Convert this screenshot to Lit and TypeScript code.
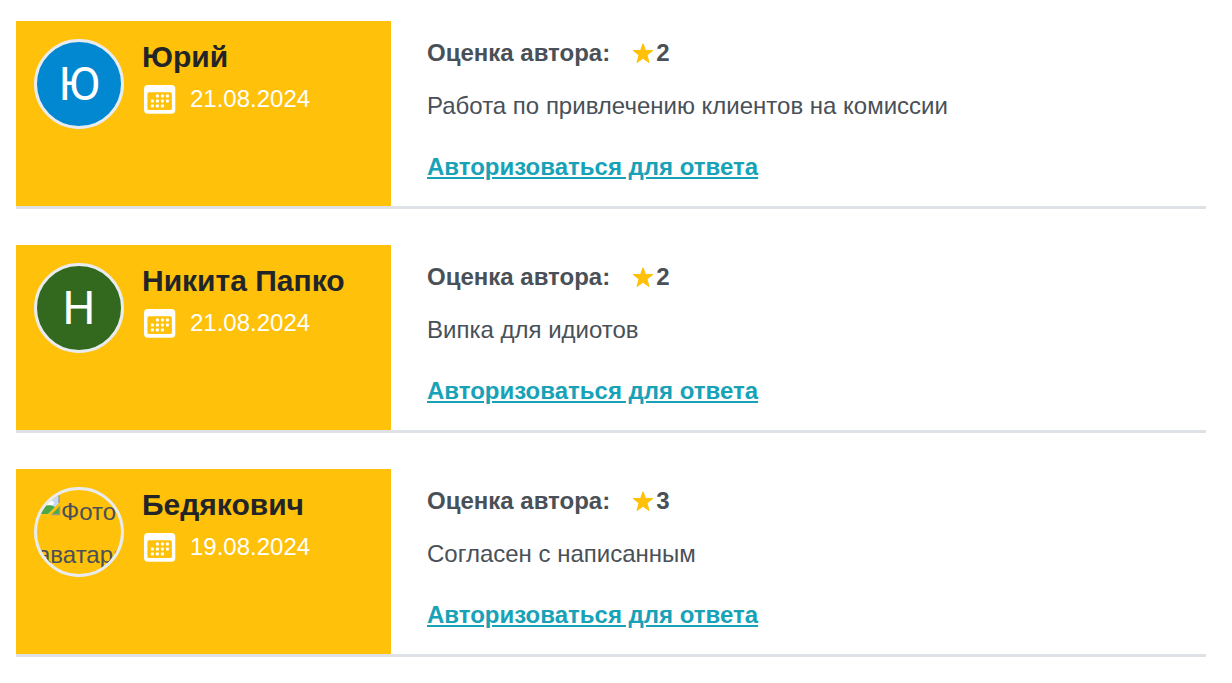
import { LitElement, html, css, svg } from "lit";
import { customElement, property } from "lit/decorators.js";
import { classMap } from "lit/directives/class-map.js";

interface Review {
  name: string;
  date: string;
  iso: string;
  rating: number;
  text: string;
  tone: "blue" | "green" | "none";
}

const REVIEWS: Review[] = [
  { name: "Юрий", date: "21.08.2024", iso: "2024-08-21", rating: 2, text: "Работа по привлечению клиентов на комиссии", tone: "blue" },
  { name: "Никита Папко", date: "21.08.2024", iso: "2024-08-21", rating: 2, text: "Випка для идиотов", tone: "green" },
  { name: "Бедякович", date: "19.08.2024", iso: "2024-08-19", rating: 3, text: "Согласен с написанным", tone: "none" },
];

// Day dots of the calendar: [column, row]
const DAYS = [[1, 0], [2, 0], [3, 0], [0, 1], [1, 1], [2, 1], [3, 1], [0, 2], [1, 2], [2, 2]];

const calendarIcon = html`<svg class="calendar" viewBox="0 0 32 29" width="32" height="29" aria-hidden="true">
  <path fill="#fff" fill-rule="evenodd" d="M4 0h23.3a4 4 0 0 1 4 4v20.7a4 4 0 0 1-4 4H4a4 4 0 0 1-4-4V4a4 4 0 0 1 4-4zM5 7.2a1.6 1.6 0 0 0-1.6 1.6v14.6A1.6 1.6 0 0 0 5 25h21.3a1.6 1.6 0 0 0 1.6-1.6V8.8a1.6 1.6 0 0 0-1.6-1.6z"/>
  ${DAYS.map(([c, r]) => svg`<rect x=${6.9 + c * 5} y=${9.6 + r * 5} width="3" height="3" rx="0.8" fill="#fff"/>`)}
</svg>`;

const starIcon = html`<svg class="star" viewBox="0 0 22 21" width="22" height="21" aria-hidden="true">
  <path fill="#ffc107" stroke="#ffc107" stroke-width="1" stroke-linejoin="round" d="M11 .8l2.4 6.6 7.4.2-5.8 4.5 2 7.4-6-4.2-6 4.2 2-7.4L1.2 7.6l7.4-.2z"/>
</svg>`;

const brokenIcon = html`<svg class="broken" viewBox="0 0 24 24" width="24" height="24" aria-hidden="true">
  <path fill="#c6d9f4" d="M3 3h19v8L11 22H3z"/>
  <path fill="#fff" d="M5 11a3 3 0 0 1 3-3 4 4 0 0 1 7 1 2 2 0 0 1 0 4H7a2 2 0 0 1-2-2z"/>
  <path fill="#4ea744" d="M3 19c4-6 9-7 15-4l-7 7H3z"/>
  <path fill="#4ea744" d="M22 15v7h-7z"/>
  <path fill="none" stroke="#9a9a8c" stroke-width="1.4" d="M3 22V3h19v8M22.500 14v8.500h-8"/>
</svg>`;

@customElement("review-card")
export class ReviewCard extends LitElement {
  @property({ attribute: false }) review!: Review;

  static styles = css`
    :host { display: block; }
    .card {
      display: grid;
      grid-template-columns: 375px minmax(0, 1fr);
      border-bottom: 3px solid #dee2e6;
    }
    .author {
      display: flex;
      gap: 18px;
      padding: 18px;
      background: #ffc10a;
    }
    .avatar {
      flex: none;
      box-sizing: border-box;
      width: 90px;
      height: 90px;
      border: 3px solid #e9ecef;
      border-radius: 50%;
      overflow: hidden;
      display: flex;
      align-items: center;
      justify-content: center;
      color: #fff;
      font: 46px/84px Roboto, sans-serif;
    }
    .blue { background: #0288d1; }
    .green { background: #33691e; }
    .none {
      display: block;
      color: #495057;
      font: 24px/43px "Liberation Sans", sans-serif;
    }
    .broken { vertical-align: 4px; }
    .name {
      margin: 0;
      color: #212529;
      font-size: 30px;
      line-height: 36px;
      font-weight: 700;
    }
    .date {
      display: flex;
      align-items: center;
      gap: 14px;
      margin-top: 6px;
      padding-left: 2px;
      color: #fff;
      line-height: 36px;
    }
    .body {
      padding: 14px 0 21px 36px;
      line-height: 36px;
    }
    .rating {
      display: flex;
      align-items: center;
      font-weight: 700;
    }
    .star { margin: 0 2px 0 22px; }
    .text { margin: 17px 0 25px; }
    .answer {
      display: block;
      width: fit-content;
      color: #17a2b8;
      font-weight: 700;
      text-decoration: underline;
    }
  `;

  render() {
    const r = this.review;
    return html`<article class="card">
      <div class="author">
        <div class=${classMap({ avatar: true, [r.tone]: true })}>
          ${r.tone === "none" ? html`${brokenIcon}Фото аватара` : r.name[0]}
        </div>
        <div>
          <h3 class="name">${r.name}</h3>
          <div class="date">${calendarIcon}<time datetime=${r.iso}>${r.date}</time></div>
        </div>
      </div>
      <div class="body">
        <div class="rating"><span>Оценка автора:</span>${starIcon}<span>${r.rating}</span></div>
        <p class="text">${r.text}</p>
        <a class="answer" href="#login">Авторизоваться для ответа</a>
      </div>
    </article>`;
  }
}

@customElement("app-root")
export class AppRoot extends LitElement {
  static styles = css`
    :host {
      display: block;
      background: #fff;
      color: #495057;
      font: 24px/36px "Liberation Sans", Arial, sans-serif;
    }
    .list {
      display: flex;
      flex-direction: column;
      gap: 36px;
      padding: 21px 26px 27px 16px;
    }
  `;

  render() {
    return html`<main class="list">
      ${REVIEWS.map((r) => html`<review-card .review=${r}></review-card>`)}
    </main>`;
  }
}
